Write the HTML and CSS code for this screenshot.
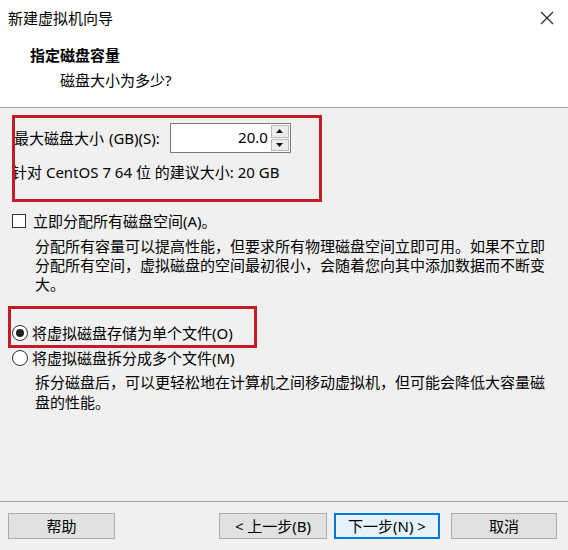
FILE: index.html
```html
<!DOCTYPE html>
<html lang="zh-CN">
<head>
<meta charset="utf-8">
<title>新建虚拟机向导</title>
<link rel="stylesheet" href="styles.css">
</head>
<body>
<div class="window">
  <div class="top">
    <div class="titlebar">
      <span class="wintitle">新建虚拟机向导</span>
      <svg class="close" width="14" height="14" viewBox="0 0 14 14"><path d="M1 1 L13 13 M13 1 L1 13" stroke="#222" stroke-width="1.1" fill="none"/></svg>
    </div>
    <div class="hdr-title">指定磁盘容量</div>
    <div class="hdr-sub">磁盘大小为多少?</div>
  </div>

  <div class="content">
    <div class="annot annot-size">
      <div class="size-row">
        <span class="size-label">最大磁盘大小 (GB)(S):</span>
        <div class="spin">
          <div class="spin-value">20.0</div>
          <div class="spin-btns">
            <div class="spin-btn"><svg width="7" height="4" viewBox="0 0 7 4"><path d="M3.5 0 L7 4 L0 4 Z" fill="#111"/></svg></div>
            <div class="spin-btn"><svg width="7" height="4" viewBox="0 0 7 4"><path d="M0 0 L7 0 L3.5 4 Z" fill="#111"/></svg></div>
          </div>
        </div>
      </div>
      <div class="rec">针对 CentOS 7 64 位 的建议大小: 20 GB</div>
    </div>

    <div class="opt check-row">
      <span class="checkbox"></span>
      <span class="opt-text">立即分配所有磁盘空间(A)。</span>
    </div>
    <p class="desc desc-alloc">分配所有容量可以提高性能，但要求所有物理磁盘空间立即可用。如果不立即分配所有空间，虚拟磁盘的空间最初很小，会随着您向其中添加数据而不断变大。</p>

    <div class="annot annot-single">
      <div class="opt radio-row">
        <span class="radio checked"></span>
        <span class="opt-text">将虚拟磁盘存储为单个文件(O)</span>
      </div>
    </div>
    <div class="opt radio-row">
      <span class="radio"></span>
      <span class="opt-text">将虚拟磁盘拆分成多个文件(M)</span>
    </div>
    <p class="desc desc-split">拆分磁盘后，可以更轻松地在计算机之间移动虚拟机，但可能会降低大容量磁盘的性能。</p>
  </div>

  <div class="footer">
    <button class="btn btn-help">帮助</button>
    <div class="nav">
      <button class="btn btn-back">&lt; 上一步(B)</button>
      <button class="btn btn-next">下一步(N) &gt;</button>
      <button class="btn btn-cancel">取消</button>
    </div>
  </div>
</div>
</body>
</html>
```

FILE: styles.css
```css
*, *::before, *::after { box-sizing: border-box; }

html, body {
  margin: 0;
  padding: 0;
}

body {
  width: 568px;
  height: 550px;
  background: #f0f0f0;
  font-family: "Noto Sans", "Noto Sans CJK SC", sans-serif;
  font-size: 15px;
  color: #000;
  overflow: hidden;
}

.window {
  width: 568px;
  height: 550px;
  display: flex;
  flex-direction: column;
}

.top {
  background: #fff;
  height: 108px;
  border-bottom: 1px solid #a0a0a0;
}

.titlebar {
  height: 36px;
  display: flex;
  align-items: center;
  justify-content: space-between;
  padding: 0 14px 0 8px;
}

.wintitle {
  line-height: 20px;
}

.hdr-title {
  margin-top: 9px;
  padding-left: 30px;
  font-weight: 700;
  line-height: 20px;
}

.hdr-sub {
  margin-top: 5px;
  padding-left: 60px;
  line-height: 20px;
}

.content {
  height: 393px;
  padding: 15px 0 0 13px;
}

.annot {
  position: relative;
}

.annot::after {
  content: "";
  position: absolute;
  border: 3px solid #c51b24;
  pointer-events: none;
}

.annot-size::after {
  left: -1px;
  top: -8px;
  width: 310px;
  height: 87px;
}

.annot-single::after {
  left: -5px;
  top: -14px;
  width: 249px;
  height: 42px;
}

.size-row {
  display: flex;
  align-items: center;
  height: 30px;
}

.size-label {
  margin-left: 1px;
  line-height: 20px;
  word-spacing: 1px;
}

.spin {
  margin-left: 10px;
  display: flex;
  height: 30px;
  width: 121px;
  border: 1px solid #7a7a7a;
  background: #fff;
}

.spin-value {
  flex: 1;
  text-align: right;
  line-height: 26px;
  padding-right: 3px;
}

.spin-btns {
  width: 19px;
  display: flex;
  flex-direction: column;
  gap: 1px;
  padding: 1px 1px 1px 0;
}

.spin-btn {
  flex: 1;
  background: #ececec;
  border: 1px solid #b9b9b9;
  display: flex;
  align-items: center;
  justify-content: center;
}

.rec {
  margin-top: 9px;
  margin-left: -1px;
  line-height: 20px;
}

.opt {
  display: flex;
  align-items: center;
}

.check-row {
  margin-top: 29px;
  height: 20px;
}

.checkbox {
  width: 14px;
  height: 14px;
  border: 1px solid #333;
  background: #fff;
  margin-left: -1px;
}

.opt-text {
  line-height: 20px;
}

.check-row .opt-text {
  margin-left: 7px;
}

.desc {
  margin: 6px 0 0 22px;
  width: 516px;
  line-height: 19px;
}

.desc-alloc {
  margin-bottom: 0;
}

.annot-single {
  margin-top: 26px;
}

.radio-row {
  height: 25px;
}

.radio {
  width: 16px;
  height: 16px;
  border-radius: 50%;
  border: 1px solid #333;
  background: #fff;
  margin-left: -1px;
  display: flex;
  align-items: center;
  justify-content: center;
}

.radio.checked::before {
  content: "";
  width: 8px;
  height: 8px;
  border-radius: 50%;
  background: #222;
}

.radio-row .opt-text {
  margin-left: 4px;
}

.desc-split {
  margin-top: 2px;
  line-height: 20px;
}

.footer {
  border-top: 1px solid #a0a0a0;
  padding: 11px 11px 0 8px;
  display: flex;
  align-items: flex-start;
}

.nav {
  margin-left: auto;
  display: flex;
}

.btn {
  height: 26px;
  width: 106px;
  padding: 0;
  background: #e1e1e1;
  border: 1px solid #adadad;
  font-family: "Noto Sans", "Noto Sans CJK SC", sans-serif;
  font-size: 15px;
  line-height: 22px;
  color: #000;
}

.btn-help {
  width: 107px;
}

.btn-back {
  width: 108px;
}

.btn-next {
  margin-left: 7px;
  border: 2px solid #0078d7;
  background: #e5f1fb;
}

.btn-cancel {
  margin-left: 11px;
}
```
